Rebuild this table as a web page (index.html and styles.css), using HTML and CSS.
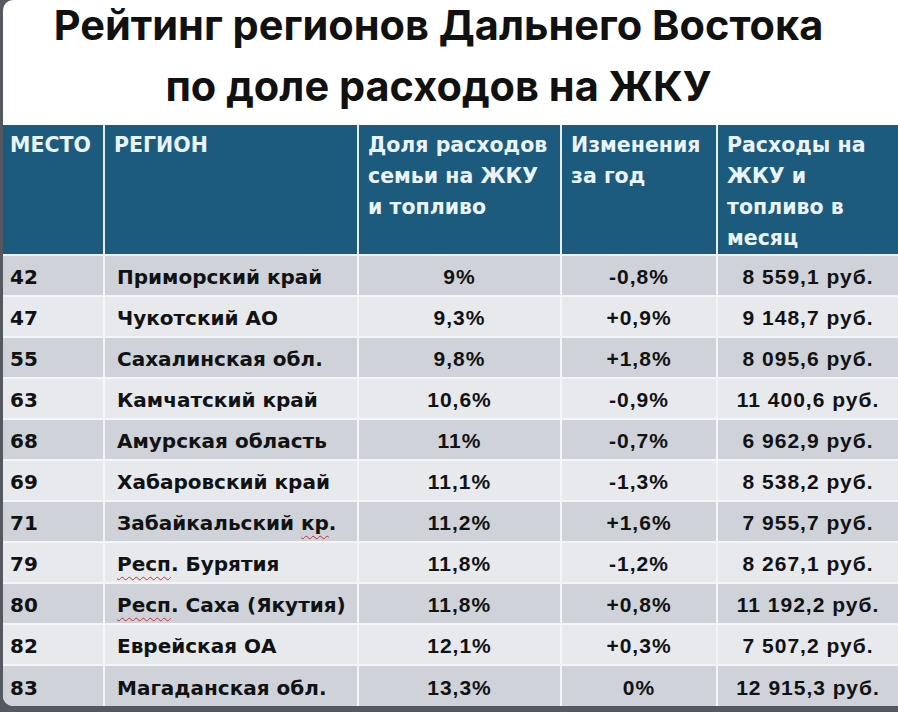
FILE: index.html
```html
<!DOCTYPE html>
<html lang="ru">
<head>
<meta charset="utf-8">
<title>Рейтинг регионов Дальнего Востока</title>
<link rel="stylesheet" href="styles.css">
</head>
<body>
<div class="card">
  <h1 class="title">Рейтинг регионов Дальнего Востока<br>по доле расходов на ЖКУ</h1>
  <table class="rating">
    <colgroup>
      <col class="c-place"><col class="c-region"><col class="c-share"><col class="c-change"><col class="c-cost">
    </colgroup>
    <thead>
      <tr>
        <th>МЕСТО</th>
        <th>РЕГИОН</th>
        <th class="h-share">Доля расходов семьи на ЖКУ и топливо</th>
        <th>Изменения за год</th>
        <th>Расходы на ЖКУ и топливо в месяц</th>
      </tr>
    </thead>
    <tbody>
      <tr><td class="place">42</td><td class="region">Приморский край</td><td class="num">9%</td><td class="num">-0,8%</td><td class="num">8 559,1 руб.</td></tr>
      <tr><td class="place">47</td><td class="region">Чукотский АО</td><td class="num">9,3%</td><td class="num">+0,9%</td><td class="num">9 148,7 руб.</td></tr>
      <tr><td class="place">55</td><td class="region">Сахалинская обл.</td><td class="num">9,8%</td><td class="num">+1,8%</td><td class="num">8 095,6 руб.</td></tr>
      <tr><td class="place">63</td><td class="region">Камчатский край</td><td class="num">10,6%</td><td class="num">-0,9%</td><td class="num">11 400,6 руб.</td></tr>
      <tr><td class="place">68</td><td class="region">Амурская область</td><td class="num">11%</td><td class="num">-0,7%</td><td class="num">6 962,9 руб.</td></tr>
      <tr><td class="place">69</td><td class="region">Хабаровский край</td><td class="num">11,1%</td><td class="num">-1,3%</td><td class="num">8 538,2 руб.</td></tr>
      <tr><td class="place">71</td><td class="region">Забайкальский <span class="spell">кр</span>.</td><td class="num">11,2%</td><td class="num">+1,6%</td><td class="num">7 955,7 руб.</td></tr>
      <tr><td class="place">79</td><td class="region"><span class="spell">Респ</span>. Бурятия</td><td class="num">11,8%</td><td class="num">-1,2%</td><td class="num">8 267,1 руб.</td></tr>
      <tr><td class="place">80</td><td class="region"><span class="spell">Респ</span>. Саха (Якутия)</td><td class="num">11,8%</td><td class="num">+0,8%</td><td class="num">11 192,2 руб.</td></tr>
      <tr><td class="place">82</td><td class="region">Еврейская ОА</td><td class="num">12,1%</td><td class="num">+0,3%</td><td class="num">7 507,2 руб.</td></tr>
      <tr><td class="place">83</td><td class="region">Магаданская обл.</td><td class="num">13,3%</td><td class="num">0%</td><td class="num">12 915,3 руб.</td></tr>
    </tbody>
  </table>
</div>
</body>
</html>
```

FILE: styles.css
```css
html, body {
  margin: 0;
  padding: 0;
}
body {
  background: #55585e;
  width: 898px;
  height: 712px;
  overflow: hidden;
}
.card {
  margin-left: 3px;
  height: 706px;
  background: #ffffff;
  border-radius: 10px 0 0 10px;
  overflow: hidden;
  font-family: "DejaVu Sans", Inter, sans-serif;
  color: #111214;
}
.title {
  margin: -5px 0 8px 0;
  padding-right: 24px;
  text-align: center;
  font-family: Inter, "Noto Sans", sans-serif;
  font-size: 41.5px;
  line-height: 61px;
  font-weight: 700;
  color: #111111;
}
.rating {
  border-collapse: collapse;
  table-layout: fixed;
  width: 895px;
}
.c-place { width: 101px; }
.c-region { width: 254px; }
.c-share { width: 203px; }
.c-change { width: 156px; }
.c-cost { width: 181px; }
.rating th {
  background: #1d5b7e;
  color: #eaf4f8;
  font-size: 20.5px;
  line-height: 31px;
  font-weight: 700;
  text-align: left;
  vertical-align: top;
  padding: 5px 4px 0 9px;
  height: 129px;
  box-sizing: border-box;
  border-left: 2px solid #e9eef2;
  border-bottom: 2px solid #eef1f4;
}
.rating th:first-child {
  padding-left: 7px;
}
.rating th.h-share {
  padding-right: 12px;
}
.rating th:first-child,
.rating td:first-child {
  border-left: 0;
}
.rating td {
  height: 41px;
  box-sizing: border-box;
  padding: 3px 8px 0 8px;
  font-size: 20px;
  font-weight: 700;
  border-left: 2px solid #f3f5f7;
  border-top: 2px solid #f3f5f7;
  vertical-align: middle;
  white-space: nowrap;
}
.rating td.place { padding-left: 7px; }
.rating tbody tr:nth-child(odd) td { background: #cfd2d8; }
.rating tbody tr:nth-child(even) td { background: #e8e9ec; }
.rating td.region { padding-left: 12px; }
.rating td.num {
  text-align: center;
  font-family: "Liberation Sans", Arial, sans-serif;
  font-size: 21px;
  letter-spacing: 1px;
}
.spell {
  text-decoration: underline wavy #c8303a;
  text-decoration-thickness: 1px;
  text-underline-offset: 5px;
}
```
